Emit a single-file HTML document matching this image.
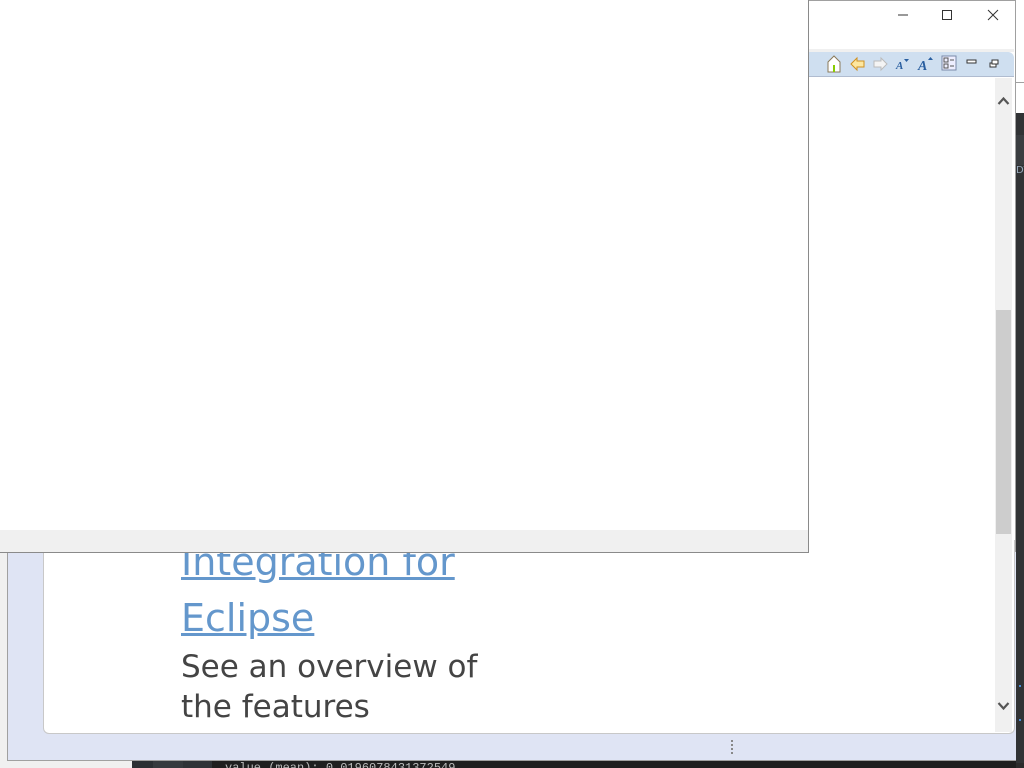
<!DOCTYPE html>
<html><head><style>
*{margin:0;padding:0;box-sizing:border-box}
body{width:1024px;height:768px;position:relative;overflow:hidden;background:#2b2b2b;font-family:"DejaVu Sans","Liberation Sans",sans-serif}
.a{position:absolute}
</style></head><body>
<div class="a" style="left:1016px;top:0;width:8px;height:82px;background:#fff"></div>
<div class="a" style="left:1016px;top:82px;width:8px;height:1px;background:#a0a0a0"></div>
<div class="a" style="left:1016px;top:83px;width:8px;height:30px;background:#fff"></div>
<div class="a" style="left:1016px;top:113px;width:8px;height:650px;background:#313335"></div>
<div class="a" style="left:1016px;top:135px;width:8px;height:30px;background:#3a3d40"></div>
<div class="a" style="left:1016px;top:165px;width:8px;height:20px;background:#313335;color:#9ab;font-size:10px;overflow:hidden">DT</div>
<div class="a" style="left:1019px;top:685px;width:2px;height:2px;background:#4b8bd5"></div>
<div class="a" style="left:1019px;top:719px;width:2px;height:2px;background:#4b8bd5"></div>
<div class="a" style="left:0;top:760px;width:132px;height:8px;background:#f0f0f0"></div>
<div class="a" style="left:132px;top:760px;width:21px;height:8px;background:#2b2f33"></div>
<div class="a" style="left:153px;top:760px;width:30px;height:8px;background:#363a3e"></div>
<div class="a" style="left:183px;top:760px;width:29px;height:8px;background:#2f3337"></div>
<div class="a" style="left:212px;top:760px;width:804px;height:8px;background:#1f1f1f;overflow:hidden"><div style="position:absolute;left:13px;top:1px;font-family:'Liberation Mono',monospace;font-size:12px;color:#bbb;white-space:nowrap">value (mean): 0.0196078431372549</div></div>
<div class="a" style="left:0;top:552px;width:8px;height:208px;background:#f0f0f0"></div>
<div class="a" style="left:7px;top:552px;width:1009px;height:209px;background:#dfe4f4;border-left:1px solid #a0a0a0;border-bottom:1px solid #a0a0a0"></div>
<div class="a" style="left:731px;top:740px;width:2px;height:15px;background:repeating-linear-gradient(#888 0 2px,transparent 2px 4px)"></div>
<div class="a" style="left:808px;top:0;width:208px;height:552px;background:#fff;border-top:1px solid #a0a0a0;border-right:1px solid #a0a0a0"></div>
<div class="a" style="left:43px;top:540px;width:972px;height:194px;background:#fff;border:1px solid #c8c8c8;border-top:none;border-radius:0 0 6px 6px;overflow:hidden">
 <div style="position:absolute;left:137px;top:-6px;font-size:38px;line-height:56px;color:#6497cc;text-decoration:underline;white-space:nowrap">Integration for<br>Eclipse</div>
 <div style="position:absolute;left:137px;top:107px;font-size:31px;line-height:40px;color:#444;white-space:nowrap">See an overview of<br>the features</div>
</div>
<div class="a" style="left:808px;top:49px;width:206px;height:3px;background:#f0f0f0"></div>
<div class="a" style="left:809px;top:52px;width:205px;height:25px;background:#cfdff0;border-bottom:1px solid #b0bcd0;border-radius:0 6px 0 0"></div>
<svg class="a" style="left:820px;top:52px" width="190" height="25" viewBox="0 0 190 25">
 <path d="M8 10 L14 4 L20 10 V20 H8Z" fill="#fff" stroke="#8a7a5a"/><rect x="13" y="13" width="2" height="7" fill="#8c0"/>
 <path d="M31 12 L37 6 V9 H44 V15 H37 V18Z" fill="#fde7a0" stroke="#d09020"/>
 <path d="M67 12 L61 6 V9 H54 V15 H61 V18Z" fill="#f4f4f4" stroke="#bbb"/>
 <text x="76" y="17" font-family="Liberation Serif" font-style="italic" font-weight="bold" font-size="11" fill="#2a5fa0">A</text><path d="M84 7 h5 l-2.5 3z" fill="#2a5fa0"/>
 <text x="98" y="18" font-family="Liberation Serif" font-style="italic" font-weight="bold" font-size="14" fill="#2a5fa0">A</text><path d="M108 8 h5 l-2.5 -3z" fill="#2a5fa0"/>
 <rect x="122" y="4" width="14" height="14" fill="#eef" stroke="#7a8aa8"/><rect x="124" y="6" width="4" height="4" fill="none" stroke="#555"/><rect x="124" y="12" width="4" height="4" fill="none" stroke="#555"/><path d="M130 8h4M130 14h4" stroke="#555"/>
 <rect x="147" y="8" width="9" height="3" fill="#fff" stroke="#333"/>
 <rect x="170" y="11" width="6" height="4" fill="#fff" stroke="#333"/><rect x="172" y="8" width="6" height="4" fill="#fff" stroke="#333"/>
</svg>
<div class="a" style="left:995px;top:78px;width:17px;height:654px;background:#f0f0f0"></div>
<div class="a" style="left:996px;top:310px;width:15px;height:224px;background:#cdcdcd"></div>
<svg class="a" style="left:995px;top:92px" width="17" height="630"><path d="M3.5 12 L8.5 6.5 L13.5 12" fill="none" stroke="#555" stroke-width="2.2"/><path d="M3.5 611 L8.5 616.5 L13.5 611" fill="none" stroke="#555" stroke-width="2.2"/></svg>
<svg class="a" style="left:890px;top:5px" width="115" height="20"><path d="M8 10h10" stroke="#333"/><rect x="52.5" y="5.5" width="9" height="9" fill="none" stroke="#333"/><path d="M98 5l10 10M108 5l-10 10" stroke="#333"/></svg>
<div class="a" style="left:0;top:0;width:809px;height:553px;background:#fff;border-right:1px solid #8a8a8a;border-bottom:1px solid #8a8a8a"></div>
<div class="a" style="left:0;top:530px;width:808px;height:22px;background:#f0f0f0"></div>
</body></html>
